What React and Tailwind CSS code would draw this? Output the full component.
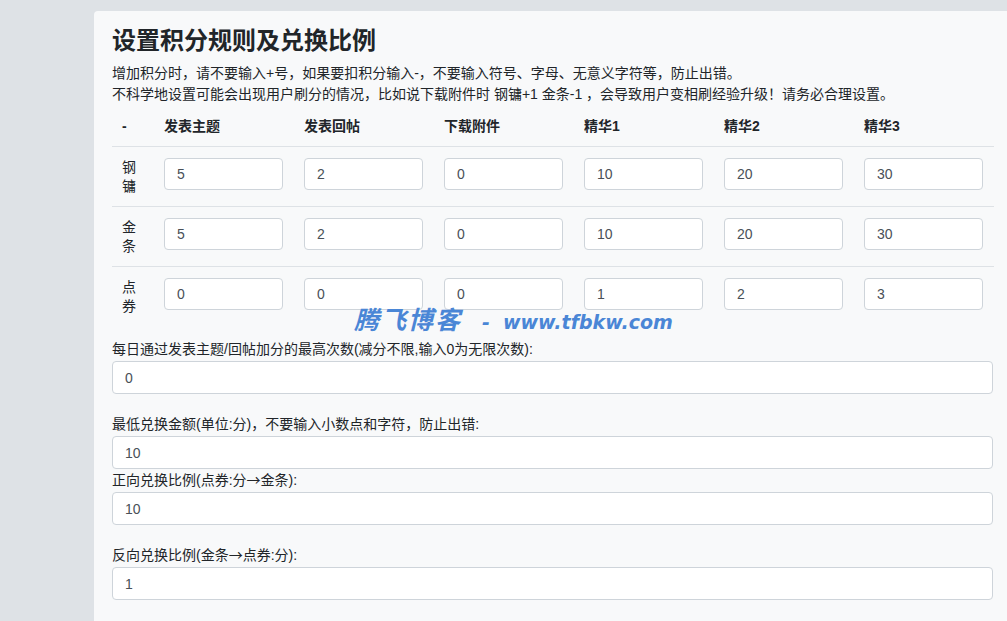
import React from 'react'

const font = {fontFamily: '"Liberation Sans", "Noto Sans CJK SC", sans-serif'};
const cjk = {fontFamily: '"Noto Sans CJK SC", sans-serif'};

const columns = ["发表主题", "发表回帖", "下载附件", "精华1", "精华2", "精华3"];

const rows = [
  {"label": "钢镛", "values": ["5", "2", "0", "10", "20", "30"]},
  {"label": "金条", "values": ["5", "2", "0", "10", "20", "30"]},
  {"label": "点券", "values": ["0", "0", "0", "1", "2", "3"]}
];

function TextInput({value, className}){
  return (
    <input
      type="text"
      defaultValue={value}
      className={"bg-white border border-[#ced4da] rounded-[4px] px-[12px] text-[14px] text-[#495057] outline-none " + (className || "")}
      style={font}>
    </input>);
}

function FormGroup({label, value, className}){
  return (
    <div className={className}>
      <div className="text-[14px] leading-[21px] text-[#212529] mb-[1px]">{label}</div>
      <TextInput value={value} className="w-[881px] h-[33px]"></TextInput>
    </div>);
}

function Arrow(){
  return <span style={cjk}>→</span>;
}

export default function App(){
  return (
    <div
      className="w-[1007px] h-[621px] overflow-hidden bg-[#dee2e6] flex pl-[94px] pt-[11px]"
      style={font}>
      <div className="relative flex-1 bg-[#f8f9fa] rounded-tl-[4px] pl-[18px] pt-[15px]">
        <h1 className="text-[24px] leading-[29px] font-bold text-[#212529]">设置积分规则及兑换比例</h1>
        <div className="mt-[8px] text-[14px] leading-[21px] text-[#212529]">
          <p>增加积分时，请不要输入+号，如果要扣积分输入-，不要输入符号、字母、无意义字符等，防止出错。</p>
          <p>不科学地设置可能会出现用户刷分的情况，比如说下载附件时 钢镛+1 金条-1 ，会导致用户变相刷经验升级！请务必合理设置。</p>
        </div>
        <div className="w-[882px] grid grid-cols-[42px_repeat(6,140px)] text-[14px] text-[#212529]">
          <div className="px-[10px] pt-[12px] pb-[10px] leading-[19px] font-bold">-</div>
          {columns.map(function (c){
            return (
              <div key={c} className="px-[10px] pt-[12px] pb-[10px] leading-[19px] font-bold">{c}</div>);
          })}
          {rows.map(function (r){
            return (
              <React.Fragment key={r.label}>
                <div className="border-t border-[#dee2e6] px-[10px] pt-[11px] pb-[10px] leading-[19px]">{r.label}</div>
                {r.values.map(function (v, i){
                  return (
                    <div key={i} className="border-t border-[#dee2e6] px-[10px] pt-[11px] pb-[10px]">
                      <TextInput value={v} className="w-[119px] h-[32px]"></TextInput>
                    </div>);
                })}
              </React.Fragment>);
          })}
        </div>
        <FormGroup
          className="mt-[13px] mb-[20px]"
          label="每日通过发表主题/回帖加分的最高次数(减分不限,输入0为无限次数):"
          value="0">
        </FormGroup>
        <FormGroup
          label="最低兑换金额(单位:分)，不要输入小数点和字符，防止出错:"
          value="10">
        </FormGroup>
        <FormGroup
          className="mb-[19px]"
          label={<>正向兑换比例(点券:分<Arrow></Arrow>金条):</>}
          value="10">
        </FormGroup>
        <FormGroup
          label={<>反向兑换比例(金条<Arrow></Arrow>点券:分):</>}
          value="1">
        </FormGroup>
        <div
          className="absolute left-[260px] top-[289px] flex items-baseline italic font-bold text-[#4a86d6] whitespace-nowrap pointer-events-none">
          <span className="text-[25px] tracking-[2px]" style={cjk}>腾飞博客</span>
          <span className="text-[19px] ml-[20px]" style={{fontFamily: '"DejaVu Sans", sans-serif'}}>-</span>
          <span className="text-[19px] ml-[13px]" style={{fontFamily: '"DejaVu Sans", sans-serif'}}>www.tfbkw.com</span>
        </div>
      </div>
    </div>);
}
